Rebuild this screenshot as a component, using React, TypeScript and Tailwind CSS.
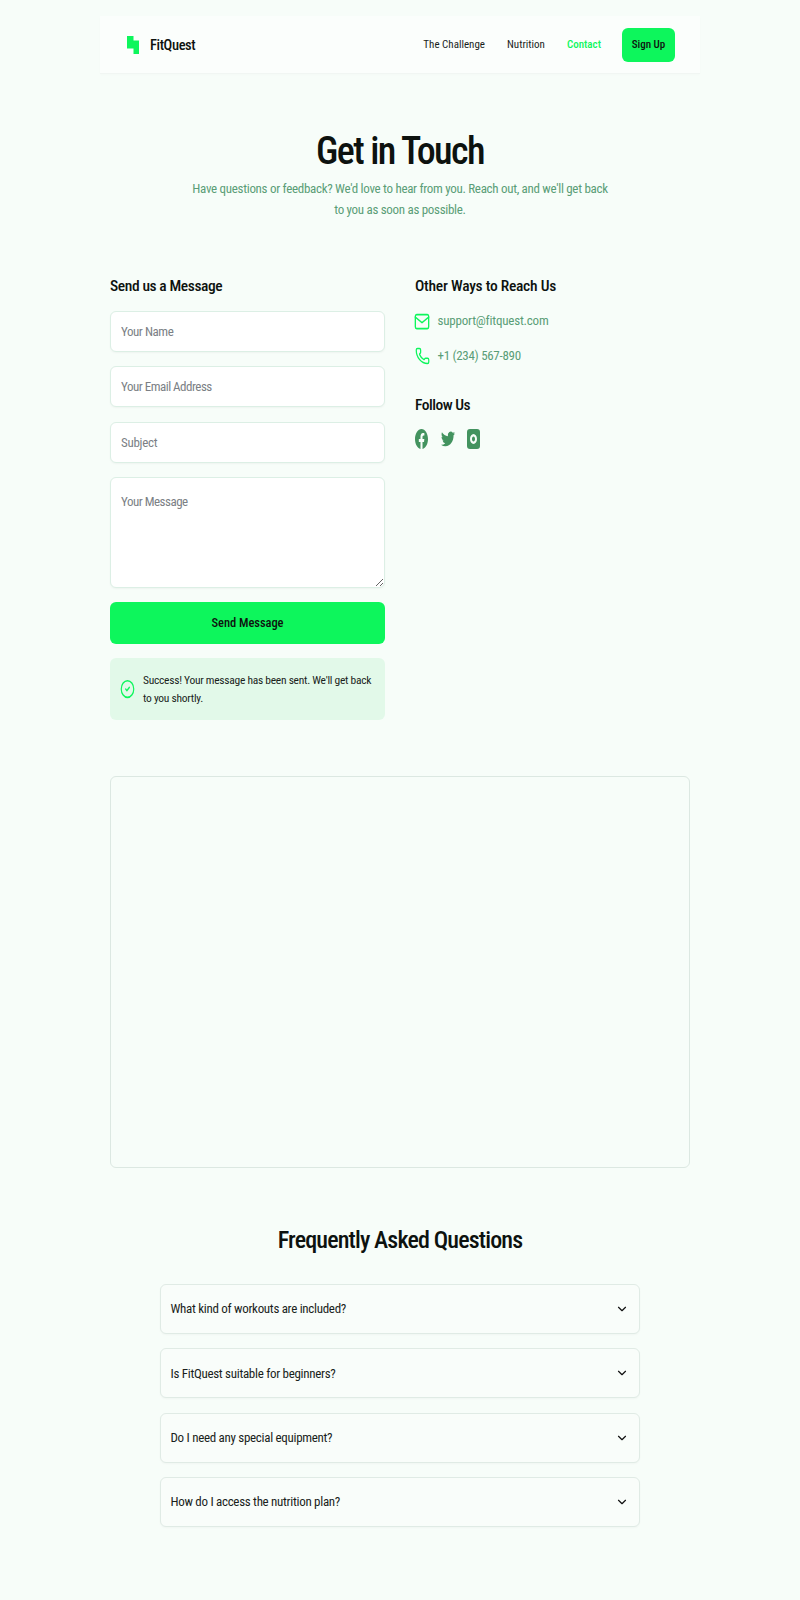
import React from "react";
import { ChevronDown, Mail, Phone, CircleCheck } from "lucide-react";

const FONT = "font-['Roboto',sans-serif] [font-stretch:75%]";

function Field({ placeholder, mt, tracking }: { placeholder: string; mt: string; tracking: string }) {
  return (
    <input
      readOnly
      placeholder={placeholder}
      className={`block h-[41px] w-full rounded-[6px] border border-[#dcefe5] bg-white px-[10px] text-[13px] shadow-[0_1px_2px_rgba(0,0,0,0.04)] outline-none placeholder:text-[#7b7f85] ${tracking} ${mt}`}
    />
  );
}

function Faq({ q }: { q: string }) {
  return (
    <div className="flex h-[50px] items-center justify-between rounded-[6px] border border-[#e0ebe5] bg-[#f9fdfa] pl-[9.5px] pr-[10px] shadow-[0_1px_2px_rgba(0,0,0,0.03)]">
      <span className="text-[13px] tracking-[-0.3px] text-[#1a1f1c]">{q}</span>
      <ChevronDown size={14} strokeWidth={2} className="text-[#111]" />
    </div>
  );
}

export default function App() {
  return (
    <div className={`min-h-[1600px] bg-[#f7fdf9] pt-[16px] ${FONT}`}>
      <div className="mx-auto w-[600px]">
        <nav className="flex h-[58px] items-center justify-between border-b border-[#f1f6f3] bg-[#fbfefc] pl-[27px] pr-[25px] shadow-[0_1px_3px_rgba(0,0,0,0.015)]">
          <div className="flex items-center gap-[11px]">
            <svg width="12" height="18" viewBox="0 0 12 18" className="block">
              <path d="M0 0H6.5V4.5H12V18H6.5V12.5H0Z" fill="#0df65c" />
            </svg>
            <span className="pt-[2px] text-[14.5px] font-medium tracking-[-0.4px] text-[#0d120f]">FitQuest</span>
          </div>
          <div className="flex items-center">
            <span className="pt-[2px] text-[11px] text-[#1a1f1c]">The Challenge</span>
            <span className="ml-[22px] pt-[2px] text-[11px] text-[#1a1f1c]">Nutrition</span>
            <span className="ml-[22px] pt-[2px] text-[11px] font-medium text-[#0df65c]">Contact</span>
            <span className="ml-[21px] flex h-[34px] w-[53px] items-center justify-center rounded-[6px] bg-[#0df65c] pt-[1px] text-[11px] font-medium text-[#0d120f]">
              Sign Up
            </span>
          </div>
        </nav>

        <main className="px-[10px]">
          <section className="pt-[55px] text-center">
            <h1 className="text-[38px] font-medium leading-[44px] tracking-[-1.6px] text-[#0d120f]">Get in Touch</h1>
            <p className="mx-auto mt-[5px] w-[425px] text-[13px] leading-[21px] tracking-[-0.3px] text-[#5a9d77]">
              Have questions or feedback? We'd love to hear from you. Reach out, and we'll get back to you as soon as possible.
            </p>
          </section>

          <section className="mt-[54px] grid grid-cols-[275px_1fr] gap-x-[30px]">
            <div>
              <h2 className="text-[15.5px] font-medium leading-[24px] tracking-[-0.4px] text-[#0d120f]">Send us a Message</h2>
              <Field placeholder="Your Name" mt="mt-[13px]" tracking="tracking-[-0.45px]" />
              <Field placeholder="Your Email Address" mt="mt-[14px]" tracking="tracking-[-0.5px]" />
              <Field placeholder="Subject" mt="mt-[15px]" tracking="tracking-[-0.3px]" />
              <textarea
                readOnly
                placeholder="Your Message"
                className="mt-[14px] block h-[111px] w-full rounded-[6px] border border-[#dcefe5] bg-white px-[10px] py-[14px] text-[13px] tracking-[-0.5px] shadow-[0_1px_2px_rgba(0,0,0,0.04)] outline-none placeholder:text-[#7b7f85]"
              />
              <button className="mt-[14px] block h-[42px] w-full rounded-[6px] bg-[#0df65c] text-[12.5px] font-medium tracking-[-0.05px] text-[#0d120f]">
                Send Message
              </button>
              <div className="mt-[14px] flex h-[62px] items-center rounded-[6px] bg-[#e2f9e9] pl-[10px] pr-[12px]">
                <CircleCheck width={15} height={20} preserveAspectRatio="none" strokeWidth={1.9} className="shrink-0 text-[#0df65c]" />
                <p className="ml-[8px] text-[11.5px] leading-[18px] tracking-[-0.27px] text-[#1a1f1c]">
                  Success! Your message has been sent. We'll get back to you shortly.
                </p>
              </div>
            </div>

            <div>
              <h2 className="text-[15.5px] font-medium leading-[24px] tracking-[-0.25px] text-[#0d120f]">Other Ways to Reach Us</h2>
              <div className="mt-[11px] flex h-[24px] items-center gap-[8.5px]">
                <Mail width={16} height={21} preserveAspectRatio="none" strokeWidth={2} className="-mx-[1px] -my-[3px] text-[#0df65c]" />
                <span className="text-[13px] tracking-[-0.2px] text-[#5a9d77]">support@fitquest.com</span>
              </div>
              <div className="mt-[11px] flex h-[24px] items-center gap-[8.5px]">
                <Phone width={15} height={18} preserveAspectRatio="none" strokeWidth={2} className="-my-[2px] -mr-[1px] text-[#0df65c]" />
                <span className="text-[13px] tracking-[-0.3px] text-[#5a9d77]">+1 (234) 567-890</span>
              </div>
              <h2 className="mt-[25px] text-[15.5px] font-medium leading-[24px] tracking-[-0.5px] text-[#0d120f]">Follow Us</h2>
              <div className="mt-[12px] flex items-center gap-[12.5px] text-[#43935f]">
                <svg width="13" height="20" viewBox="0 0 24 24" preserveAspectRatio="none" fill="currentColor">
                  <path d="M24 12.07C24 5.4 18.63 0 12 0S0 5.4 0 12.07c0 6.02 4.39 11.02 10.13 11.93v-8.44H7.08v-3.49h3.05V9.41c0-3.02 1.79-4.69 4.53-4.69 1.31 0 2.68.24 2.68.24v2.97h-1.51c-1.49 0-1.96.93-1.96 1.88v2.26h3.33l-.53 3.49h-2.8V24C19.61 23.09 24 18.09 24 12.07z" />
                </svg>
                <svg width="14" height="18" viewBox="0 0 24 24" preserveAspectRatio="none" fill="currentColor">
                  <path d="M23.95 4.57a10 10 0 0 1-2.82.77 4.96 4.96 0 0 0 2.16-2.72c-.95.55-2 .95-3.13 1.18a4.92 4.92 0 0 0-8.38 4.48C7.69 8.1 4.07 6.13 1.64 3.16a4.82 4.82 0 0 0-.66 2.47c0 1.71.87 3.21 2.19 4.09a4.9 4.9 0 0 1-2.23-.61v.06c0 2.38 1.69 4.37 3.95 4.83-.42.11-.86.17-1.3.17-.31 0-.61-.03-.92-.08a4.93 4.93 0 0 0 4.6 3.42A9.87 9.87 0 0 1 0 19.54a13.9 13.9 0 0 0 7.55 2.21c9.06 0 14-7.5 14-13.98 0-.21 0-.42-.02-.63a9.94 9.94 0 0 0 2.46-2.55z" />
                </svg>
                <svg width="13" height="20" viewBox="0 0 13 20" fill="currentColor">
                  <path fillRule="evenodd" d="M3 0h7a3 3 0 0 1 3 3v14a3 3 0 0 1-3 3H3a3 3 0 0 1-3-3V3a3 3 0 0 1 3-3zm3.5 5C4.6 5 3 7.2 3 10s1.6 5 3.5 5S10 12.8 10 10 8.4 5 6.5 5zm0 2.6c.9 0 1.5 1.1 1.5 2.4s-.6 2.4-1.5 2.4S5 11.300 5 10s.6-2.4 1.5-2.4z" />
                </svg>
              </div>
            </div>
          </section>

          <div className="mt-[56px] h-[392px] rounded-[6px] border border-[#dce8e2] bg-[#f7fdf9]" />

          <section className="mt-[55px]">
            <h2 className="text-center text-[24px] font-medium leading-[34px] tracking-[-0.85px] text-[#0d120f]">Frequently Asked Questions</h2>
            <div className="mx-auto mt-[27px] flex w-[480px] flex-col gap-[14.33px]">
              <Faq q="What kind of workouts are included?" />
              <Faq q="Is FitQuest suitable for beginners?" />
              <Faq q="Do I need any special equipment?" />
              <Faq q="How do I access the nutrition plan?" />
            </div>
          </section>
        </main>
      </div>
    </div>
  );
}
